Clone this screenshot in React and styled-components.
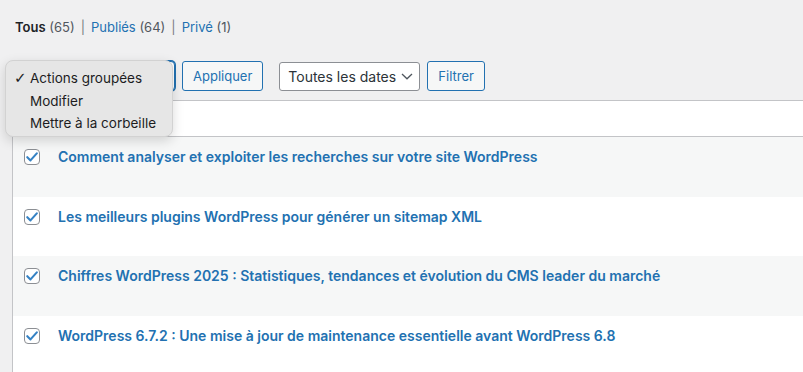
import React from 'react'
import styled, { createGlobalStyle } from 'styled-components'

const GlobalStyle = createGlobalStyle`
  html, body {
    margin: 0;
    background: #f0f0f1;
    font-family: Inter, "Liberation Sans", sans-serif;
    color: #3c434a;
    overflow: hidden;
  }
`

const Page = styled.div`
  position: relative;
  width: 803px;
  height: 372px;
  overflow: hidden;
  padding-left: 12px;
  box-sizing: border-box;
`

const StatusList = styled.ul`
  list-style: none;
  margin: 0;
  padding: 14px 0 0 3px;
  height: 25px;
  display: flex;
  align-items: center;
  font-size: 13px;
  color: #50575e;
`

const StatusItem = styled.li`
  white-space: pre;
`

const StatusLink = styled.a`
  color: ${(p) => (p.$current ? '#1d2327' : '#2271b1')};
  font-weight: ${(p) => (p.$current ? 600 : 400)};
  text-decoration: none;
`

const Sep = styled.span`
  color: #787c82;
  margin: 0 6px;
`

const Toolbar = styled.div`
  display: flex;
  align-items: center;
  gap: 7px;
  margin-top: 22px;
  height: 30px;
`

const HiddenSelect = styled.div`
  width: 163px;
  height: 30px;
  box-sizing: border-box;
  border: 1px solid #2271b1;
  box-shadow: 0 0 0 1px #2271b1;
  border-radius: 4px;
  background: #fff;
`

const Button = styled.button`
  height: 30px;
  padding: 0 10px;
  box-sizing: border-box;
  border: 1px solid #2271b1;
  border-radius: 3px;
  background: #f6f7f7;
  color: #2271b1;
  font-family: inherit;
  font-size: 13px;
`

const DateSelect = styled.div`
  margin-left: 9px;
  width: 141px;
  height: 29px;
  box-sizing: border-box;
  border: 1px solid #8c8f94;
  border-radius: 3px;
  background: #fff;
  display: flex;
  align-items: center;
  justify-content: space-between;
  padding: 0 6px 0 8px;
  font-size: 14px;
  color: #2c3338;
`

const Table = styled.div`
  margin-top: 9px;
  width: calc(100% + 20px);
  background: #fff;
  border: 1px solid #c3c4c7;
  border-bottom: none;
`

const HeadRow = styled.div`
  height: 35px;
  border-bottom: 1px solid #c3c4c7;
  display: flex;
  align-items: center;
  padding-left: 11px;
`

const Row = styled.div`
  height: 59.5px;
  background: ${(p) => (p.$striped ? '#f6f7f7' : '#fff')};
  display: flex;
  align-items: flex-start;
  padding: 11px 0 0 11px;
  box-sizing: border-box;
`

const Check = styled.span`
  flex: none;
  width: 16px;
  height: 16px;
  box-sizing: border-box;
  border: 1px solid #8c8f94;
  border-radius: 4px;
  background: #fff;
  display: flex;
  align-items: center;
  justify-content: center;
  margin-top: 1px;
`

const Title = styled.a`
  margin-left: 18px;
  font-size: 14px;
  font-weight: 600;
  color: #2271b1;
  text-decoration: none;
  line-height: 18px;
  white-space: nowrap;
`

const Menu = styled.div`
  position: absolute;
  left: 5px;
  top: 60px;
  width: 168px;
  height: 77px;
  box-sizing: border-box;
  padding: 6px 0;
  background: #e6e6e6;
  border: 1px solid #d2d2d2;
  border-radius: 8px;
  box-shadow: 0 4px 12px rgba(0, 0, 0, 0.15);
  font-size: 13.5px;
  color: #1d1d1f;
`

const MenuItem = styled.div`
  height: 22.5px;
  display: flex;
  align-items: center;
  padding-left: 24px;
  position: relative;
`

const Tick = styled.span`
  position: absolute;
  left: 8px;
  font-size: 15px;
  font-family: "DejaVu Sans", sans-serif;
`

const CheckMark = () => (
  <svg width="12" height="10" viewBox="0 0 12 10">
    <path d="M1.3 5.2 L4.5 8.4 L10.8 1.4" fill="none" stroke="#3582c4" strokeWidth="2.1" strokeLinecap="round" strokeLinejoin="round" />
  </svg>
)

const Chevron = () => (
  <svg width="12" height="7" viewBox="0 0 12 7">
    <path d="M1 1 L6 5.8 L11 1" fill="none" stroke="#50575e" strokeWidth="1.3" />
  </svg>
)

const posts = [
  'Comment analyser et exploiter les recherches sur votre site WordPress',
  'Les meilleurs plugins WordPress pour générer un sitemap XML',
  'Chiffres WordPress 2025 : Statistiques, tendances et évolution du CMS leader du marché',
  'WordPress 6.7.2 : Une mise à jour de maintenance essentielle avant WordPress 6.8',
]

export default function App() {
  return (
    <>
      <GlobalStyle />
      <Page>
        <StatusList>
          <StatusItem>
            <StatusLink $current>Tous</StatusLink> (65)<Sep>|</Sep>
          </StatusItem>
          <StatusItem>
            <StatusLink>Publiés</StatusLink> (64)<Sep>|</Sep>
          </StatusItem>
          <StatusItem>
            <StatusLink>Privé</StatusLink> (1)
          </StatusItem>
        </StatusList>
        <Toolbar>
          <HiddenSelect />
          <Button>Appliquer</Button>
          <DateSelect>
            Toutes les dates <Chevron />
          </DateSelect>
          <Button>Filtrer</Button>
        </Toolbar>
        <Table>
          <HeadRow>
            <Check />
          </HeadRow>
          {posts.map((title, i) => (
            <Row key={i} $striped={i % 2 === 0}>
              <Check>
                <CheckMark />
              </Check>
              <Title>{title}</Title>
            </Row>
          ))}
        </Table>
        <Menu>
          <MenuItem>
            <Tick>✓</Tick>Actions groupées
          </MenuItem>
          <MenuItem>Modifier</MenuItem>
          <MenuItem>Mettre à la corbeille</MenuItem>
        </Menu>
      </Page>
    </>
  )
}
